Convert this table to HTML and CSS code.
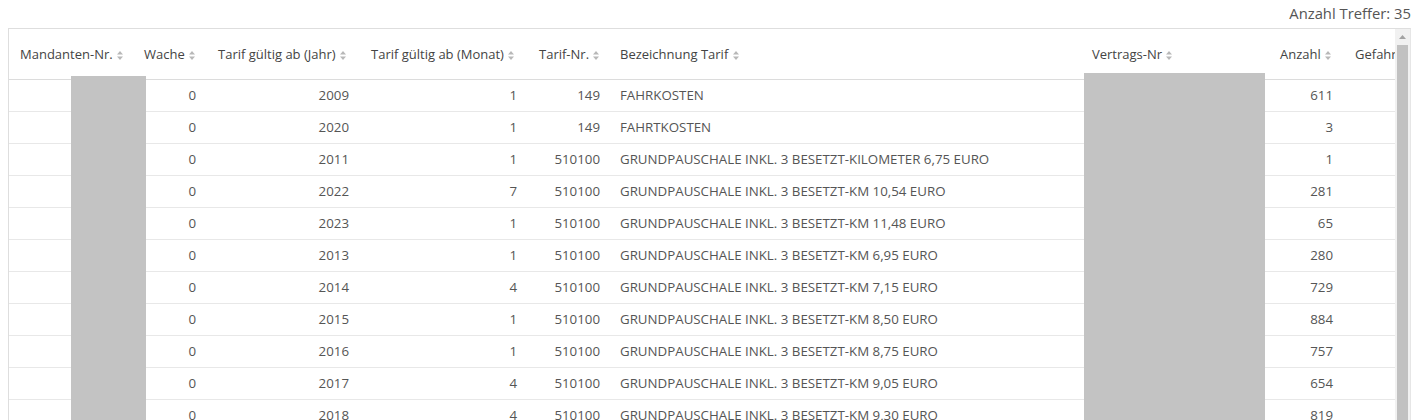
FILE: index.html
```html
<!DOCTYPE html>
<html lang="de">
<head>
<meta charset="utf-8">
<title>Tarife</title>
<link rel="stylesheet" href="styles.css">
</head>
<body>
<div class="hits">Anzahl Treffer: 35</div>
<div class="table-wrap">
  <div class="table-scroll">
    <table class="grid">
      <colgroup>
        <col class="c1"><col class="c2"><col class="c3"><col class="c4"><col class="c5"><col class="c6"><col class="c7"><col class="c8"><col class="c9">
      </colgroup>
      <thead>
        <tr>
          <th>Mandanten-Nr. <svg class="sort" viewBox="0 0 6 9"><path d="M3 0L6 3.5H0Z M3 9L6 5.5H0Z"/></svg></th>
          <th>Wache <svg class="sort" viewBox="0 0 6 9"><path d="M3 0L6 3.5H0Z M3 9L6 5.5H0Z"/></svg></th>
          <th>Tarif gültig ab (Jahr) <svg class="sort" viewBox="0 0 6 9"><path d="M3 0L6 3.5H0Z M3 9L6 5.5H0Z"/></svg></th>
          <th>Tarif gültig ab (Monat) <svg class="sort" viewBox="0 0 6 9"><path d="M3 0L6 3.5H0Z M3 9L6 5.5H0Z"/></svg></th>
          <th>Tarif-Nr. <svg class="sort" viewBox="0 0 6 9"><path d="M3 0L6 3.5H0Z M3 9L6 5.5H0Z"/></svg></th>
          <th class="txt">Bezeichnung Tarif <svg class="sort" viewBox="0 0 6 9"><path d="M3 0L6 3.5H0Z M3 9L6 5.5H0Z"/></svg></th>
          <th class="vn">Vertrags-Nr <svg class="sort" viewBox="0 0 6 9"><path d="M3 0L6 3.5H0Z M3 9L6 5.5H0Z"/></svg></th>
          <th>Anzahl <svg class="sort" viewBox="0 0 6 9"><path d="M3 0L6 3.5H0Z M3 9L6 5.5H0Z"/></svg></th>
          <th class="last">Gefahrgut <svg class="sort" viewBox="0 0 6 9"><path d="M3 0L6 3.5H0Z M3 9L6 5.5H0Z"/></svg></th>
        </tr>
      </thead>
      <tbody>
        <tr><td></td><td class="n">0</td><td class="n">2009</td><td class="n">1</td><td class="n">149</td><td class="txt">FAHRKOSTEN</td><td></td><td class="n">611</td><td></td></tr>
        <tr><td></td><td class="n">0</td><td class="n">2020</td><td class="n">1</td><td class="n">149</td><td class="txt">FAHRTKOSTEN</td><td></td><td class="n">3</td><td></td></tr>
        <tr><td></td><td class="n">0</td><td class="n">2011</td><td class="n">1</td><td class="n">510100</td><td class="txt">GRUNDPAUSCHALE INKL. 3 BESETZT-KILOMETER 6,75 EURO</td><td></td><td class="n">1</td><td></td></tr>
        <tr><td></td><td class="n">0</td><td class="n">2022</td><td class="n">7</td><td class="n">510100</td><td class="txt">GRUNDPAUSCHALE INKL. 3 BESETZT-KM 10,54 EURO</td><td></td><td class="n">281</td><td></td></tr>
        <tr><td></td><td class="n">0</td><td class="n">2023</td><td class="n">1</td><td class="n">510100</td><td class="txt">GRUNDPAUSCHALE INKL. 3 BESETZT-KM 11,48 EURO</td><td></td><td class="n">65</td><td></td></tr>
        <tr><td></td><td class="n">0</td><td class="n">2013</td><td class="n">1</td><td class="n">510100</td><td class="txt">GRUNDPAUSCHALE INKL. 3 BESETZT-KM 6,95 EURO</td><td></td><td class="n">280</td><td></td></tr>
        <tr><td></td><td class="n">0</td><td class="n">2014</td><td class="n">4</td><td class="n">510100</td><td class="txt">GRUNDPAUSCHALE INKL. 3 BESETZT-KM 7,15 EURO</td><td></td><td class="n">729</td><td></td></tr>
        <tr><td></td><td class="n">0</td><td class="n">2015</td><td class="n">1</td><td class="n">510100</td><td class="txt">GRUNDPAUSCHALE INKL. 3 BESETZT-KM 8,50 EURO</td><td></td><td class="n">884</td><td></td></tr>
        <tr><td></td><td class="n">0</td><td class="n">2016</td><td class="n">1</td><td class="n">510100</td><td class="txt">GRUNDPAUSCHALE INKL. 3 BESETZT-KM 8,75 EURO</td><td></td><td class="n">757</td><td></td></tr>
        <tr><td></td><td class="n">0</td><td class="n">2017</td><td class="n">4</td><td class="n">510100</td><td class="txt">GRUNDPAUSCHALE INKL. 3 BESETZT-KM 9,05 EURO</td><td></td><td class="n">654</td><td></td></tr>
        <tr><td></td><td class="n">0</td><td class="n">2018</td><td class="n">4</td><td class="n">510100</td><td class="txt">GRUNDPAUSCHALE INKL. 3 BESETZT-KM 9,30 EURO</td><td></td><td class="n">819</td><td></td></tr>
        <tr><td></td><td class="n">0</td><td class="n">2019</td><td class="n">1</td><td class="n">510100</td><td class="txt">GRUNDPAUSCHALE INKL. 3 BESETZT-KM 9,55 EURO</td><td></td><td class="n">700</td><td></td></tr>
      </tbody>
    </table>
    <div class="mask mask-mandant"></div>
    <div class="mask mask-vertrag"></div>
  </div>
  <div class="scrollbar">
    <div class="sb-arrow"><svg viewBox="0 0 7 4"><path d="M3.5 0L7 4H0Z"/></svg></div>
    <div class="sb-thumb"></div>
  </div>
</div>
</body>
</html>
```
FILE: styles.css
```css
html, body {
  height: 100%;
}
body {
  margin: 0 7px 0 8px;
  font-family: "Open Sans", "Noto Sans", "DejaVu Sans", sans-serif;
  color: #555;
  background: #fff;
  overflow: hidden;
}
.hits {
  height: 28px;
  text-align: right;
  font-size: 14.8px;
  line-height: 26px;
  color: #555;
}
.table-wrap {
  display: flex;
  border: 1px solid #dedede;
  border-right-color: #e6e6e6;
  height: 400px;
  position: relative;
}
.table-scroll {
  flex: 1;
  overflow: hidden;
  position: relative;
}
.grid {
  border-collapse: collapse;
  table-layout: fixed;
  width: 1464px;
  font-size: 13.3px;
}
.c1 { width: 124px; }
.c2 { width: 74px; }
.c3 { width: 153px; }
.c4 { width: 168px; }
.c5 { width: 83px; }
.c6 { width: 470px; }
.c7 { width: 188px; }
.c8 { width: 75px; }
.c9 { width: 129px; }
.grid th {
  height: 49px;
  padding: 0 11px 1px;
  text-align: left;
  font-weight: 500;
  color: #444;
  white-space: nowrap;
  border-bottom: 1px solid #dcdcdc;
  font-size: 13px;
}
.grid td {
  height: 29px;
  padding: 0 11px 2px;
  border-bottom: 1px solid #e8e8e8;
  white-space: nowrap;
  color: #555;
}
.grid td.n { text-align: right; }
.grid .txt { padding-left: 9px; }
.grid .vn { padding-left: 11px; }
.sort {
  width: 6px;
  height: 9px;
  fill: #b8b8b8;
  vertical-align: -1px;
  margin-left: 1px;
}
.mask {
  position: absolute;
  bottom: 0;
  background: #c3c3c3;
}
.mask-mandant {
  left: 62px;
  top: 47px;
  width: 75px;
}
.mask-vertrag {
  left: 1075px;
  top: 44px;
  width: 181px;
}
.scrollbar {
  width: 15px;
  background: #f1f1f1;
  display: flex;
  flex-direction: column;
  align-items: center;
}
.sb-arrow {
  height: 16px;
  width: 15px;
  display: flex;
  align-items: center;
  justify-content: center;
}
.sb-arrow svg {
  width: 7px;
  height: 4px;
  fill: #a3a3a3;
}
.sb-thumb {
  width: 11px;
  flex: 1;
  background: #c1c1c1;
}
```
